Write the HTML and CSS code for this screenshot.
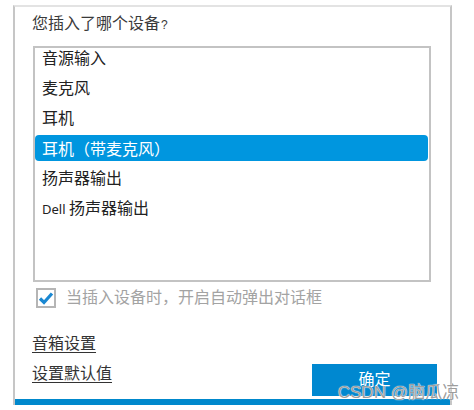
FILE: index.html
```html
<!DOCTYPE html>
<html>
<head>
	<meta charset="UTF-8">
	<title>设备选择</title>
	<link rel="stylesheet" href="styles.css">
</head>
<body>

<div class="dialog">
	<div class="title">您插入了哪个设备<span class="q">?</span></div>

	<div class="listbox">
		<ul class="list">
			<li>音源输入</li>
			<li>麦克风</li>
			<li>耳机</li>
			<li class="on">耳机（带麦克风）</li>
			<li>扬声器输出</li>
			<li><span class="latin">Dell</span> 扬声器输出</li>
		</ul>
	</div>

	<div class="auto">
		<span class="check">
			<svg width="16" height="16" viewBox="0 0 16 16"><path d="M2 8.5 L6 12.5 L14 3.5" fill="none" stroke="#1a88d2" stroke-width="3.2"/></svg>
		</span>
		<span class="auto-text">当插入设备时，开启自动弹出对话框</span>
	</div>

	<div class="footer">
		<div class="links">
			<a href="#">音箱设置</a>
			<a href="#">设置默认值</a>
		</div>
		<button class="ok">确定</button>
	</div>

	<div class="bar"></div>
</div>

<div class="mark">CSDN @脑瓜凉</div>

</body>
</html>
```

FILE: styles.css
```css
*{ margin: 0; padding: 0;}
li{ list-style: none;}
body{ font-family: "Noto Sans CJK SC", "Noto Sans", sans-serif; font-size: 16px; color: #333; background: #fff;}

.dialog{ width: 405px; margin: 5px 0 0 13px; padding: 3px 13px 0 17px; border: 2px solid #c6c6c6; border-top-color: #e3e3e3; border-bottom: none;}

.title{ height: 24px; line-height: 24px; color: #3a3a3a; overflow: hidden;}
.title .q{ font-family: "Liberation Sans", sans-serif; font-size: 12px; margin-left: 1px;}

.listbox{ width: 394px; height: 232px; margin: 12px 0 0 1px; border: 2px solid #c3c3c3; overflow: hidden;}
.list{ display: flex; flex-direction: column; margin-top: -5px;}
.list li{ height: 26px; line-height: 25px; margin: 2px 1px 2px 0; padding-left: 7px; color: #222; border-radius: 4px;}
.list li.on{ background: #0096df; color: #fff; line-height: 26px;}
.list .latin{ font-family: "Noto Sans", sans-serif; font-size: 13px;}

.auto{ display: flex; align-items: flex-start; margin-top: 6px; padding-left: 4px;}
.check{ width: 16px; height: 16px; border: 2px solid #b5b5b5; display: flex; align-items: center; justify-content: center;}
.auto-text{ margin-left: 10px; line-height: 16px; color: #a3a3a3;}

.footer{ display: flex; justify-content: space-between; margin-top: 19px;}
.links{ display: flex; flex-direction: column; padding-bottom: 9px;}
.links a{ line-height: 30px; color: #333; text-decoration: underline; text-underline-offset: 3px;}
.ok{ align-self: flex-end; width: 125px; height: 32px; padding-bottom: 4px; border: none; background: #0088d0; color: #fff; font-family: inherit; font-size: 16px;}

.bar{ height: 6px; margin: 3px -13px 0 -17px; background: #0088cc;}

.mark{ position: absolute; left: 338px; top: 378px; font-family: "Liberation Sans", "Noto Sans CJK SC", sans-serif; font-size: 17px; color: rgba(140,140,140,0.85); text-shadow: 0 0 1px #fff, 0 0 1px #fff;}
```
